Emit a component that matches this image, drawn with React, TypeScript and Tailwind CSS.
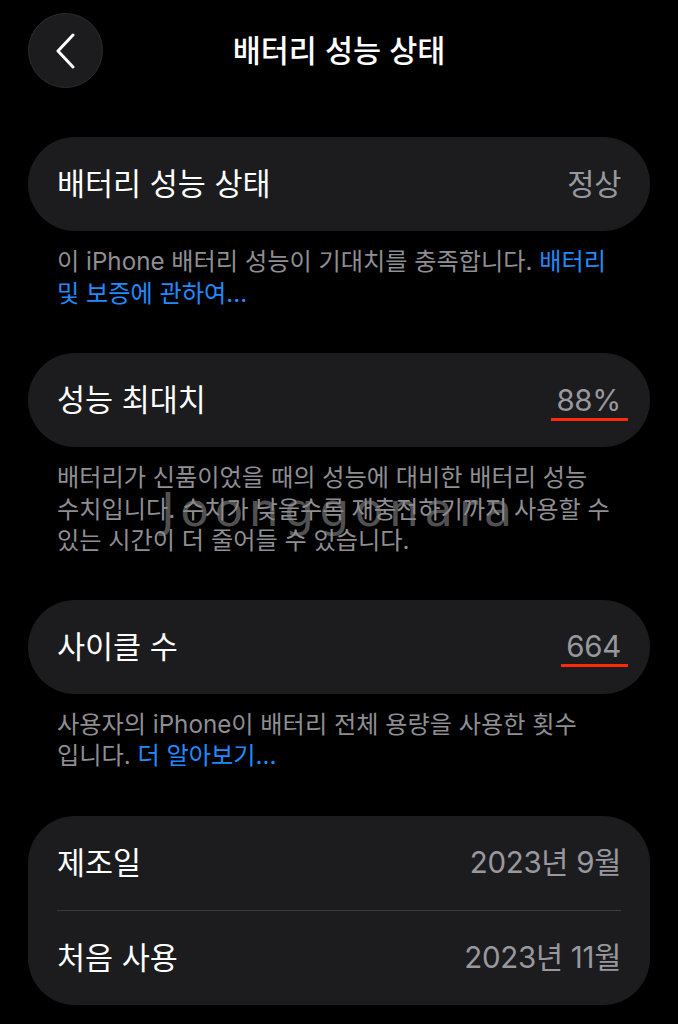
import { ReactNode } from 'react';

const font = "font-['Inter','Noto_Sans_CJK_KR',sans-serif]";

function BackButton() {
    return (
        <button className="w-[75px] h-[75px] rounded-full bg-[#1c1c1e] border border-[#2c2c2e] flex items-center justify-center">
            <svg width="24" height="36" viewBox="0 0 24 36" fill="none">
                <path d="M19 2 L4 18 L19 34" stroke="#ffffff" strokeWidth="3" strokeLinecap="round" strokeLinejoin="round" />
            </svg>
        </button>
    );
}

// red hand-drawn underline under a highlighted value
function Marked({ children }: { children: ReactNode }) {
    return (
        <span className="relative inline-block">
            {children}
            <span className="absolute left-[-5px] right-[-7px] top-[40px] h-[3px] bg-[#ff2a0a]" />
        </span>
    );
}

function Row({ label, value }: { label: string; value: ReactNode }) {
    return (
        <div className="h-[94px] px-[29px] flex items-center justify-between">
            <span className="text-[30.5px] text-white">{label}</span>
            <span className="text-[29.5px] text-[#98989f] tracking-[-0.3px]">{value}</span>
        </div>
    );
}

function Card({ children }: { children: ReactNode }) {
    return <div className="mx-[28px] bg-[#1c1c1e] rounded-[47px]">{children}</div>;
}

function Note({ children }: { children: ReactNode }) {
    return (
        <p className="relative mx-[57px] mt-[15px] text-[24.2px] leading-[31.5px] text-[#8e8e93] whitespace-nowrap">
            {children}
        </p>
    );
}

export default function App() {
    return (
        <div className={`min-h-[1024px] w-[678px] bg-black ${font}`}>
            <header className="pt-[13px] px-[28px] grid grid-cols-[75px_1fr_75px] items-center">
                <BackButton />
                <h1 className="text-center text-[30.5px] font-medium text-white">배터리 성능 상태</h1>
                <div />
            </header>

            <div className="mt-[49px]">
                <Card>
                    <Row label="배터리 성능 상태" value="정상" />
                </Card>
                <Note>
                    이 iPhone 배터리 성능이 기대치를 충족합니다. <span className="text-[#1f8bff]">배터리</span>
                    <br />
                    <span className="text-[#1f8bff]">및 보증에 관하여...</span>
                </Note>
            </div>

            <div className="mt-[44px]">
                <Card>
                    <Row label="성능 최대치" value={<Marked>88%</Marked>} />
                </Card>
                <Note>
                    배터리가 신품이었을 때의 성능에 대비한 배터리 성능
                    <br />
                    수치입니다. 수치가 낮을수록 재충전하기까지 사용할 수
                    <br />
                    있는 시간이 더 줄어들 수 있습니다.
                    <span className="absolute left-[104px] top-[24px] text-[47px] leading-none font-['DejaVu_Sans',sans-serif] text-[#8a8a8a]/60 tracking-[5.5px] pointer-events-none">
                        Joonggonara
                    </span>
                </Note>
            </div>

            <div className="mt-[43px]">
                <Card>
                    <Row label="사이클 수" value={<Marked>664</Marked>} />
                </Card>
                <Note>
                    사용자의 iPhone이 배터리 전체 용량을 사용한 횟수
                    <br />
                    입니다. <span className="text-[#1f8bff]">더 알아보기...</span>
                </Note>
            </div>

            <div className="mt-[44px]">
                <Card>
                    <Row label="제조일" value="2023년 9월" />
                    <div className="mx-[29px] h-px bg-[#3a3a3c]" />
                    <Row label="처음 사용" value="2023년 11월" />
                </Card>
            </div>
        </div>
    );
}
